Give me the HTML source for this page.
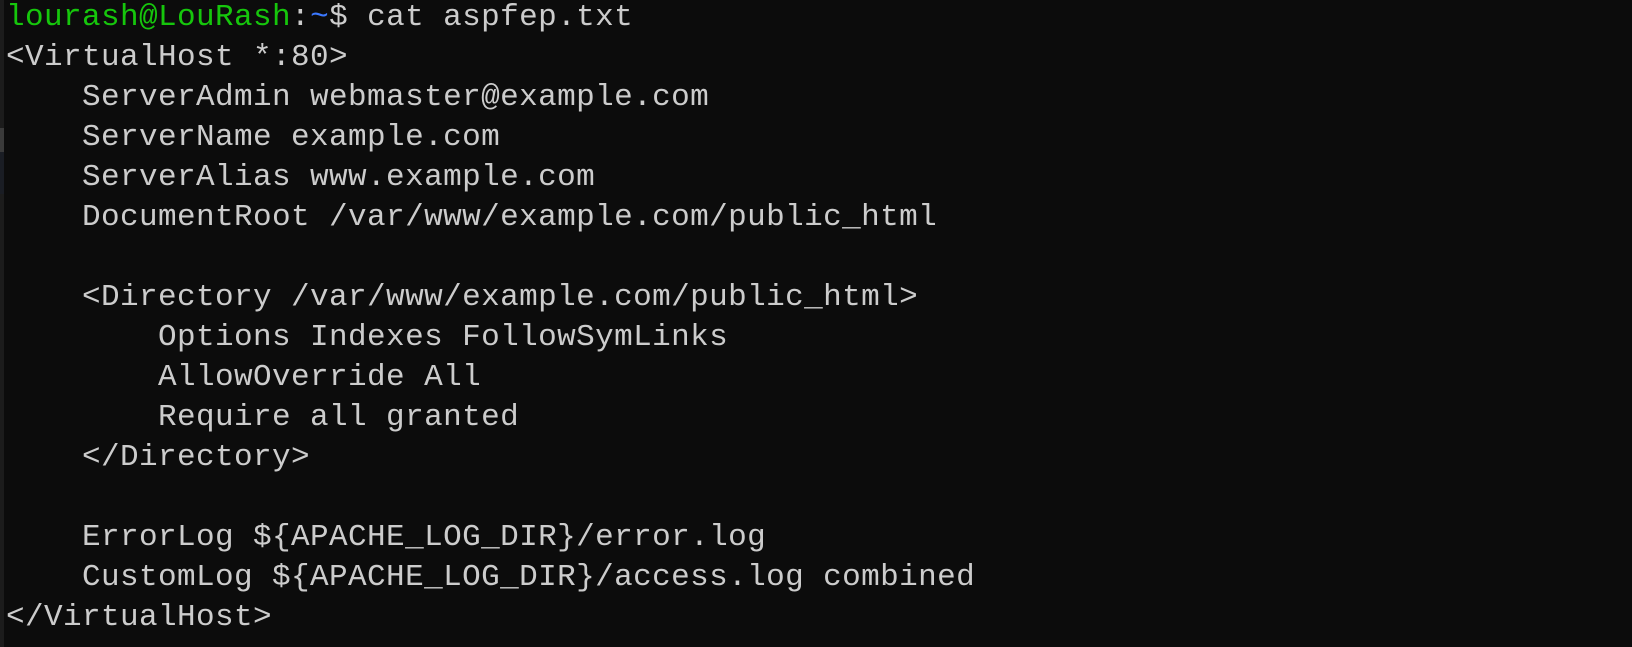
<!DOCTYPE html>
<html><head><meta charset="utf-8"><style>
html,body{margin:0;padding:0;background:#0c0c0c;width:1632px;height:647px;overflow:hidden}
.strip{position:absolute;left:0;top:0;width:4px;height:647px;background:#1c1c1c}
.s2{position:absolute;left:0;top:128px;width:4px;height:24px;background:#3a3a3a}
.s3{position:absolute;left:0;top:152px;width:4px;height:42px;background:#1a1d24}
pre{position:absolute;left:6px;top:-2px;margin:0;font-family:"Liberation Mono",monospace;font-size:31px;letter-spacing:0.4px;line-height:40px;color:#cccccc}
.g{color:#16c60c}.b{color:#3b78ff}
</style></head><body>
<div class="strip"></div><div class="s2"></div><div class="s3"></div>
<pre><span class="g">lourash@LouRash</span>:<span class="b">~</span>$ cat aspfep.txt
&lt;VirtualHost *:80&gt;
    ServerAdmin webmaster@example.com
    ServerName example.com
    ServerAlias www.example.com
    DocumentRoot /var/www/example.com/public_html

    &lt;Directory /var/www/example.com/public_html&gt;
        Options Indexes FollowSymLinks
        AllowOverride All
        Require all granted
    &lt;/Directory&gt;

    ErrorLog ${APACHE_LOG_DIR}/error.log
    CustomLog ${APACHE_LOG_DIR}/access.log combined
&lt;/VirtualHost&gt;</pre>
</body></html>
